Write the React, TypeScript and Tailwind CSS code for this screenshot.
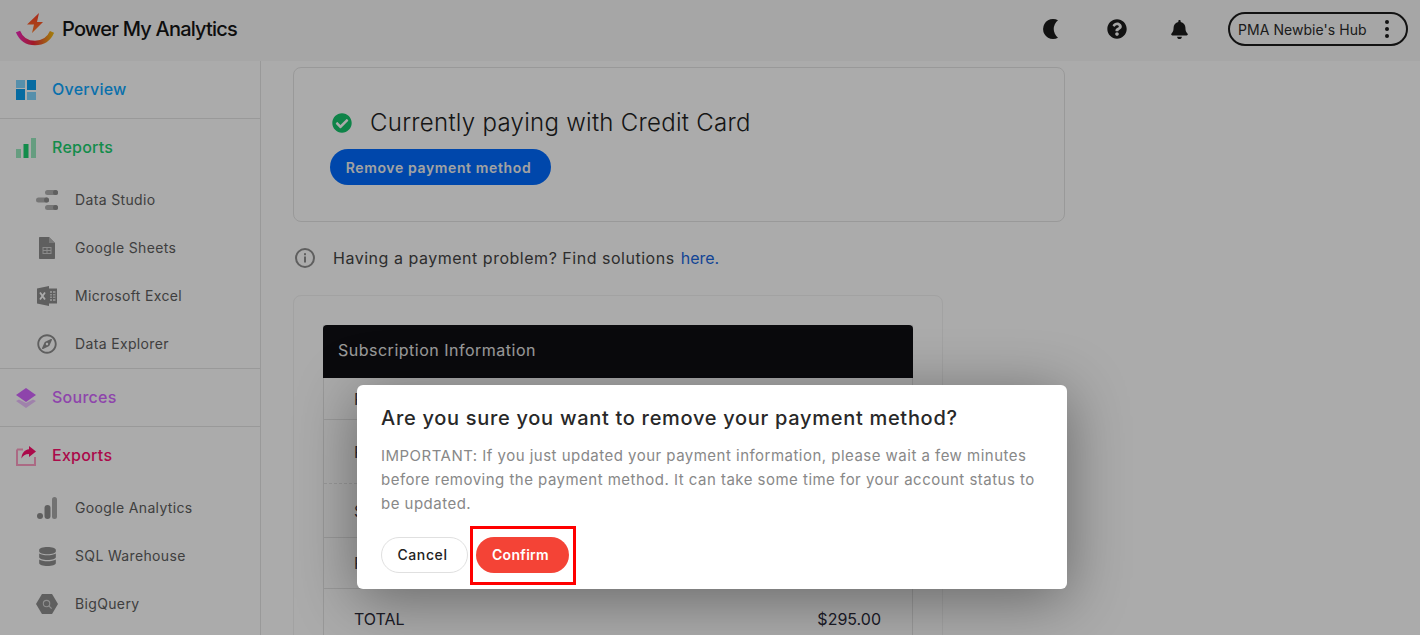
import { FaBell, FaCheckCircle, FaDatabase, FaQuestionCircle, FaRegCompass } from "react-icons/fa";

/* brand mark */
function Logo() {
  return (
    <svg width="38" height="33" viewBox="0 0 38 33" className="shrink-0">
      <defs>
        <linearGradient id="arc" x1="0" y1="0" x2="1" y2="0">
          <stop offset="0" stopColor="#f026b4" />
          <stop offset="0.45" stopColor="#f0283c" />
          <stop offset="1" stopColor="#f2b414" />
        </linearGradient>
        <linearGradient id="bolt" x1="0" y1="0" x2="0" y2="1">
          <stop offset="0" stopColor="#ff3c28" />
          <stop offset="1" stopColor="#ff7a28" />
        </linearGradient>
      </defs>
      <path d="M2 18.5C5 26 11 30 19 30C27 30 33 26 36 19" fill="none" stroke="url(#arc)" strokeWidth="4.5" />
      <path d="M23 0L11 11.5H18L16 20L27 9H21Z" fill="url(#bolt)" />
    </svg>
  );
}

function IconMoon() {
  return (
    <svg width="15" height="20" viewBox="0 0 15 20" className="shrink-0">
      <path d="M15 1.3A10 10 0 1 0 15 18.7A11 11 0 0 1 15 1.3Z" fill="#1c1c1c" />
    </svg>
  );
}

/* sidebar glyphs */
function IconOverview() {
  return (
    <svg width="20" height="20" viewBox="0 0 20 20">
      <rect x="0" y="0" width="9" height="8" fill="#17b4ff" opacity="0.55" />
      <rect x="11" y="0" width="9" height="10" fill="#0aa0f0" />
      <rect x="0" y="9" width="9" height="11" fill="#0aa0f0" />
      <rect x="11" y="12" width="9" height="8" fill="#17b4ff" opacity="0.55" />
    </svg>
  );
}
function IconReports() {
  return (
    <svg width="20" height="20" viewBox="0 0 20 20">
      <rect x="0" y="11" width="5" height="9" fill="#1bd170" opacity="0.45" />
      <rect x="7.5" y="6" width="5" height="14" fill="#1bd170" />
      <rect x="15" y="0" width="5" height="20" fill="#1bd170" opacity="0.45" />
    </svg>
  );
}
function IconSources() {
  return (
    <svg width="20" height="20" viewBox="0 0 20 20">
      <path d="M0 13L3 11.5L10 15L17 11.5L20 13L10 20Z" fill="#d466ff" opacity="0.4" />
      <path d="M10 0L20 7L10 14L0 7Z" fill="#d466ff" />
    </svg>
  );
}
function IconExports() {
  return (
    <svg width="20" height="20" viewBox="0 0 20 20">
      <path d="M1 3.5H7M1 3.5V19H19V11" fill="none" stroke="#ff0f6f" strokeWidth="2" opacity="0.4" />
      <path d="M13 0L20 5.5L13 11V8C9 8 7 9.5 5.5 12.5C5.5 7.5 8.5 3.5 13 3.2Z" fill="#ff0f6f" />
    </svg>
  );
}
function IconStudio() {
  return (
    <svg width="22" height="20" viewBox="0 0 22 20" fill="#8e8e8e">
      <rect x="9" y="0" width="13" height="5" rx="2.5" opacity="0.7" />
      <circle cx="19.5" cy="2.5" r="2.5" />
      <rect x="0" y="7.5" width="13" height="5" rx="2.5" opacity="0.7" />
      <circle cx="10.5" cy="10" r="2.5" />
      <rect x="9" y="15" width="13" height="5" rx="2.5" opacity="0.7" />
      <circle cx="19.5" cy="17.5" r="2.5" />
    </svg>
  );
}
function IconSheets() {
  return (
    <svg width="16" height="22" viewBox="0 0 16 22">
      <path d="M1 0H10L16 6V21C16 21.6 15.6 22 15 22H1C.4 22 0 21.6 0 21V1C0 .4.4 0 1 0Z" fill="#8e8e8e" />
      <path d="M10 0L16 6H10Z" fill="#b5b5b5" />
      <path d="M3.5 10H12.5V17H3.5ZM4.5 11V13H7.5V11ZM8.5 11V13H11.5V11ZM4.5 14V16H7.5V14ZM8.5 14V16H11.5V14Z" fill="#cfcfcf" fillRule="evenodd" />
    </svg>
  );
}
function IconExcel() {
  return (
    <svg width="20" height="20" viewBox="0 0 20 20">
      <path d="M0 2.5L12 0V20L0 17.5Z" fill="#8e8e8e" />
      <path d="M12 2.5H20V17.5H12Z" fill="#8e8e8e" />
      <path d="M13 5H18.5V15H13Z" fill="#fff" opacity="0.6" />
      <path d="M13 7.5H18.5M13 10H18.5M13 12.5H18.5M15.5 5V15" stroke="#8e8e8e" strokeWidth="1" />
      <path d="M3 6.5L8 13.5M8 6.5L3 13.5" stroke="#fff" strokeWidth="1.8" />
    </svg>
  );
}
function IconAnalytics() {
  return (
    <svg width="20" height="22" viewBox="0 0 20 22" fill="#8e8e8e">
      <circle cx="3" cy="19" r="3" />
      <rect x="7.5" y="8" width="6" height="14" rx="3" />
      <rect x="15" y="0" width="5" height="22" rx="2.5" opacity="0.75" />
    </svg>
  );
}
function IconBigQuery() {
  return (
    <svg width="24" height="22" viewBox="0 0 24 22">
      <path d="M6.5 0H17.5L24 11L17.5 22H6.5L0 11Z" fill="#8e8e8e" />
      <circle cx="11.5" cy="10.5" r="3.5" fill="none" stroke="#d5d5d5" strokeWidth="1.2" />
      <path d="M14 13L17 16" stroke="#d5d5d5" strokeWidth="1.4" />
    </svg>
  );
}

function NavHeader({ icon, label, color, border = true }: { icon: React.ReactNode; label: string; color: string; border?: boolean }) {
  return (
    <div className={`flex items-center pl-4 ${border ? "h-[58px] border-t border-[#e5e5e5]" : "h-[57px]"}`}>
      <span className="w-[36px] flex items-center">{icon}</span>
      <span className={`pb-[2px] text-[16px] font-medium tracking-[0.25px] ${color}`}>{label}</span>
    </div>
  );
}
function NavItem({ icon, label }: { icon: React.ReactNode; label: string }) {
  return (
    <div className="h-12 flex items-center">
      <span className="w-[75px] pl-[36px] pr-[17px] flex items-center justify-center">{icon}</span>
      <span className="pb-[1px] text-[14px] text-[#5e5e5e] tracking-[0.35px]">{label}</span>
    </div>
  );
}

function Row({ label, h, dashed }: { label: string; h: string; dashed?: boolean }) {
  return (
    <div className={`${h} flex items-center pl-[30px] text-[16px] text-[#3a3a4a] border-b border-[#e5e5e5] ${dashed ? "border-dashed" : ""}`}>
      {label}
    </div>
  );
}

export default function App() {
  return (
    <div className="relative h-[635px] overflow-hidden bg-white font-['Inter','Liberation_Sans',sans-serif]">
      <header className="h-[61px] flex items-center bg-[#f8f8f8] pl-4 pr-3 pb-[3px]">
        <Logo />
        <span className="ml-2 text-[20px] font-medium tracking-[-0.8px] text-[#161616]">Power My Analytics</span>
        <div className="ml-auto flex items-center">
          <IconMoon />
          <FaQuestionCircle className="ml-[49px] text-[20px] text-[#1c1c1c]" />
          <FaBell className="ml-[43px] text-[19px] text-[#1c1c1c]" />
          <div className="ml-[39px] h-[34px] w-[180px] flex items-center justify-between rounded-full border-2 border-[#1c1c1c] pl-[8px] pr-[17px]">
            <span className="text-[14px] text-[#2a2a2a] tracking-[0.05px]">PMA Newbie's Hub</span>
            <span className="flex flex-col gap-[3px]">
              <i className="block size-[4px] rounded-full bg-[#1c1c1c]" />
              <i className="block size-[4px] rounded-full bg-[#1c1c1c]" />
              <i className="block size-[4px] rounded-full bg-[#1c1c1c]" />
            </span>
          </div>
        </div>
      </header>

      <div className="flex h-[574px]">
        <aside className="w-[261px] shrink-0 border-r border-[#e5e5e5]">
          <NavHeader icon={<IconOverview />} label="Overview" color="text-[#0fa8ff]" border={false} />
          <NavHeader icon={<IconReports />} label="Reports" color="text-[#1bd170]" />
          <NavItem icon={<IconStudio />} label="Data Studio" />
          <NavItem icon={<IconSheets />} label="Google Sheets" />
          <NavItem icon={<IconExcel />} label="Microsoft Excel" />
          <NavItem icon={<FaRegCompass className="text-[20px] text-[#8e8e8e]" />} label="Data Explorer" />
          <NavHeader icon={<IconSources />} label="Sources" color="text-[#d466ff]" />
          <NavHeader icon={<IconExports />} label="Exports" color="text-[#ff0f6f]" />
          <NavItem icon={<IconAnalytics />} label="Google Analytics" />
          <NavItem icon={<FaDatabase className="text-[19px] text-[#8e8e8e]" />} label="SQL Warehouse" />
          <NavItem icon={<IconBigQuery />} label="BigQuery" />
        </aside>

        <main className="flex-1 overflow-hidden pl-[32px] pt-[6px]">
          <section className="w-[772px] h-[155px] rounded-lg border border-[#e5e5e5] pl-[36px] pt-[39px]">
            <div className="flex items-center pl-[2px] h-[32px]">
              <FaCheckCircle className="text-[20px] text-[#15c46c]" />
              <span className="ml-[18px] text-[24px] font-light text-[#222] tracking-[0.28px]">Currently paying with Credit Card</span>
            </div>
            <button className="mt-[10px] h-9 w-[221px] rounded-full bg-[#006bff] pr-1 text-[14px] font-semibold text-[#f2f2f2] tracking-[0.63px]">
              Remove payment method
            </button>
          </section>

          <div className="mt-[20px] h-[32px] flex items-center text-[16px] text-[#444] tracking-[0.52px]">
            <svg width="20" height="20" viewBox="0 0 20 20" className="ml-[2px] mr-[18px]">
              <circle cx="10" cy="10" r="9" fill="none" stroke="#8e8e8e" strokeWidth="2" />
              <rect x="9" y="8.5" width="2" height="6" fill="#8e8e8e" />
              <rect x="9" y="5.2" width="2" height="2" fill="#8e8e8e" />
            </svg>
            <span>Having a payment problem? Find solutions</span>
            <span className="ml-[6px] text-[#1a66e0] tracking-[0px]">here.</span>
          </div>

          <section className="mt-[21px] w-[650px] h-[400px] rounded-lg border border-[#f2f2f2] pl-[29px] pt-[29px]">
            <div className="w-[590px] border-x border-[#e5e5e5]">
              <div className="h-[53px] -mx-px flex items-center rounded-t bg-[#101014] pl-[15px] pb-[3px] text-[16px] text-[#e8e8e8] tracking-[0.5px]">
                Subscription Information
              </div>
              <Row label="P" h="h-[42px]" />
              <Row label="P" h="h-[64px]" dashed />
              <Row label="S" h="h-[54px]" />
              <Row label="P" h="h-[51px]" />
              <div className="h-[60px] flex items-center justify-between pl-[30px] pr-[31px] text-[16px] text-[#2a2a3a]">
                <span>TOTAL</span>
                <span>$295.00</span>
              </div>
            </div>
          </section>
        </main>
      </div>

      {/* dimmed backdrop */}
      <div className="absolute inset-0 bg-black/33" />

      {/* confirm dialog */}
      <div className="absolute left-[357px] top-[385px] h-[204px] w-[710px] rounded-md bg-white pl-[24px] pr-[24px] pt-[20px] shadow-[0_10px_60px_rgba(0,0,0,0.4)]">
        <h2 className="text-[20px] leading-[26px] font-medium text-[#282828] tracking-[0.7px]">Are you sure you want to remove your payment method?</h2>
        <p className="mt-[13px] text-[15px] leading-[24px] text-[#888888] tracking-[0.48px]">
          IMPORTANT: If you just updated your payment information, please wait a few minutes before removing the payment method. It can take some time for your account status to be updated.
        </p>
        <div className="mt-[21px] flex gap-2">
          <button className="h-9 w-[87px] rounded-full border border-[#e0e0e0] pr-1 pb-[2px] text-[14px] font-medium text-[#222] tracking-[0.6px]">Cancel</button>
          <button className="h-9 w-[93px] rounded-full bg-[#f44336] pr-1 pb-[2px] text-[14px] font-semibold text-white tracking-[0.3px]">Confirm</button>
        </div>
        {/* annotation box */}
        <div className="absolute left-[113px] top-[141px] h-[59px] w-[106px] border-[3px] border-[#ff0000]" />
      </div>
    </div>
  );
}
